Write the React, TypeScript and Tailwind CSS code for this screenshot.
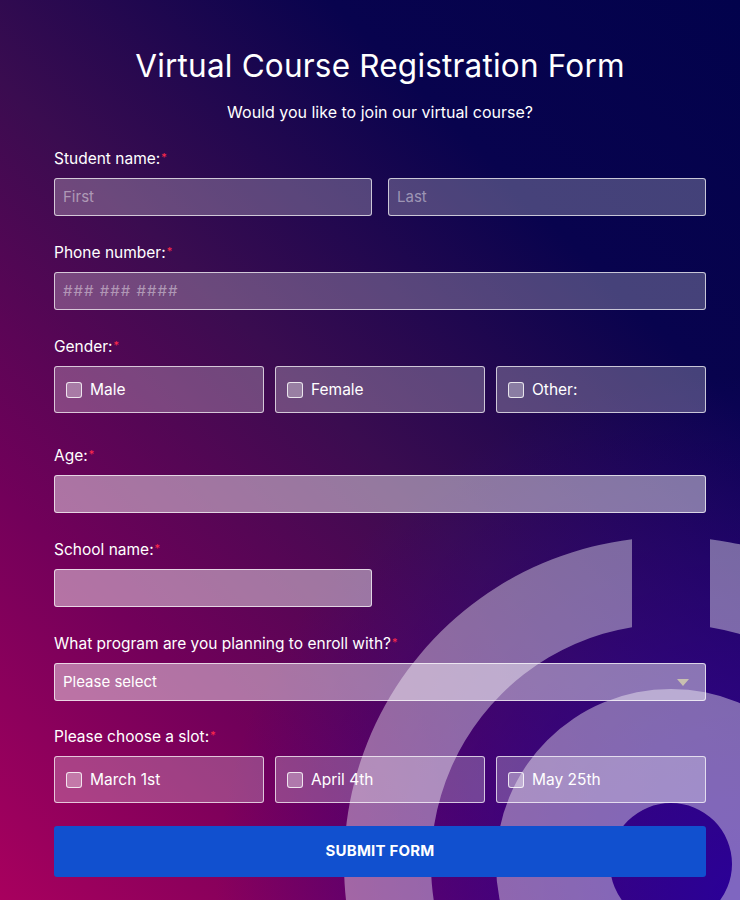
import React from 'react';

type BoxOption = { label: string };

const Req = () => <span className="text-[#ff2b4a] text-[11px] align-top relative -top-[2px] ml-[1px]">*</span>;

const Label = ({ text, className }: { text: string; className?: string }) => (
  <div className={`text-white text-[15.5px] leading-[18px] ${className ?? ''}`}>
    {text}
    <Req />
  </div>
);

const inputBase =
  'h-[38px] rounded-[3px] border border-white/70 px-[8px] flex items-center text-[15px]';

const Checkbox = () => (
  <span className="w-[16px] h-[16px] rounded-[3px] border border-white/80 bg-white/30 shrink-0" />
);

const BoxRow = ({ options }: { options: BoxOption[] }) => (
  <div className="grid grid-cols-3 gap-[11px] mt-[10px]">
    {options.map((o) => (
      <div
        key={o.label}
        className="h-[47px] rounded-[3px] border border-white/70 bg-white/25 flex items-center gap-[8px] px-[11px] text-white text-[15.5px]"
      >
        <Checkbox />
        <span>{o.label}</span>
      </div>
    ))}
  </div>
);

const Decoration = () => (
  <svg className="absolute left-0 top-0 pointer-events-none" width={740} height={900} viewBox="0 0 740 900">
    <path
      d="M 632 539.3 A 327 327 0 1 0 710 539.3 L 710 627.2 A 240 240 0 1 1 632 627.2 Z"
      fill="#ffffff"
      fillOpacity={0.4}
    />
    <path
      d="M 496 864 A 175 175 0 1 0 846 864 A 175 175 0 1 0 496 864 Z M 610 864 A 61 61 0 1 1 732 864 A 61 61 0 1 1 610 864 Z"
      fill="#ffffff"
      fillRule="evenodd"
      fillOpacity={0.4}
    />
  </svg>
);

export default function App() {
  return (
    <div
      className="relative w-[740px] h-[900px] overflow-hidden bg-[radial-gradient(circle_at_100%_100%,#2a0098_0%,rgba(42,0,152,0)_45%),linear-gradient(45deg,#a8005e_0%,#72005a_25%,#3a0c50_50%,#08034e_75%,#02024c_100%)]"
      style={{ fontFamily: 'Inter, "Noto Sans", sans-serif' }}
    >
      <Decoration />
      <div className="relative ml-[54px] w-[652px] flex flex-col">
        <h1 className="text-white text-[31.5px] leading-[40px] text-center mt-[46px] tracking-[0.2px]">
          Virtual Course Registration Form
        </h1>
        <p className="text-white text-[16px] leading-[20px] text-center mt-[16px]">
          Would you like to join our virtual course?
        </p>

        <Label text="Student name:" className="mt-[28px]" />
        <div className="grid grid-cols-2 gap-[16px] mt-[10px]">
          <div className={`${inputBase} bg-white/25 text-white/45`}>First</div>
          <div className={`${inputBase} bg-white/25 text-white/45`}>Last</div>
        </div>

        <Label text="Phone number:" className="mt-[28px]" />
        <div className={`${inputBase} bg-white/25 text-white/45 mt-[10px] tracking-[1px]`}>### ### ####</div>

        <Label text="Gender:" className="mt-[28px]" />
        <BoxRow options={[{ label: 'Male' }, { label: 'Female' }, { label: 'Other:' }]} />

        <Label text="Age:" className="mt-[34px]" />
        <div className={`${inputBase} bg-white/45 mt-[10px]`} />

        <Label text="School name:" className="mt-[28px]" />
        <div className={`${inputBase} bg-white/45 mt-[10px] w-[318px]`} />

        <Label text="What program are you planning to enroll with?" className="mt-[28px]" />
        <div className={`${inputBase} bg-white/45 mt-[10px] justify-between text-white`}>
          <span>Please select</span>
          <span className="w-0 h-0 border-l-[6px] border-r-[6px] border-t-[7px] border-l-transparent border-r-transparent border-t-[#c8c0b0] mr-[8px]" />
        </div>

        <Label text="Please choose a slot:" className="mt-[27px]" />
        <BoxRow options={[{ label: 'March 1st' }, { label: 'April 4th' }, { label: 'May 25th' }]} />

        <button className="mt-[23px] h-[51px] rounded-[3px] bg-[#1150cf] text-white font-bold text-[15px] tracking-[0.2px]">
          SUBMIT FORM
        </button>
      </div>
    </div>
  );
}
